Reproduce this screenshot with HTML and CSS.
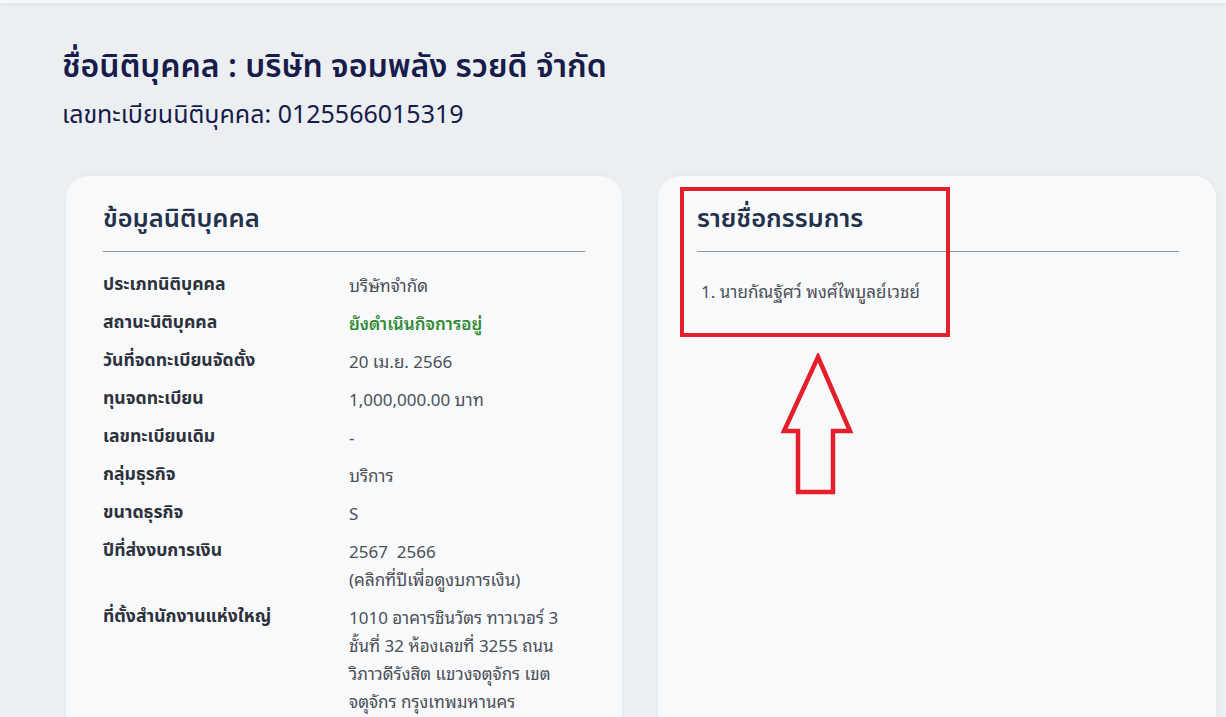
FILE: index.html
```html
<!DOCTYPE html>
<html lang="th">
<head>
<meta charset="utf-8">
<title>ข้อมูลนิติบุคคล</title>
<link rel="stylesheet" href="styles.css">
</head>
<body>
<div class="topbar"></div>
<main class="page">
  <h1 class="company">ชื่อนิติบุคคล : บริษัท จอมพลัง รวยดี จำกัด</h1>
  <p class="regno">เลขทะเบียนนิติบุคคล: 0125566015319</p>

  <div class="cards">
    <section class="card">
      <h2 class="card-title">ข้อมูลนิติบุคคล</h2>
      <dl class="info">
        <dt>ประเภทนิติบุคคล</dt><dd>บริษัทจำกัด</dd>
        <dt>สถานะนิติบุคคล</dt><dd class="ok">ยังดำเนินกิจการอยู่</dd>
        <dt>วันที่จดทะเบียนจัดตั้ง</dt><dd>20 เม.ย. 2566</dd>
        <dt>ทุนจดทะเบียน</dt><dd>1,000,000.00 บาท</dd>
        <dt>เลขทะเบียนเดิม</dt><dd>-</dd>
        <dt>กลุ่มธุรกิจ</dt><dd>บริการ</dd>
        <dt>ขนาดธุรกิจ</dt><dd>S</dd>
        <dt>ปีที่ส่งงบการเงิน</dt><dd>2567&nbsp; 2566<br>(คลิกที่ปีเพื่อดูงบการเงิน)</dd>
        <dt>ที่ตั้งสำนักงานแห่งใหญ่</dt><dd class="addr">1010 อาคารชินวัตร ทาวเวอร์ 3 ชั้นที่ 32 ห้องเลขที่ 3255 ถนน<wbr>วิภาวดีรังสิต แขวงจตุจักร เขต<wbr>จตุจักร กรุงเทพมหานคร</dd>
      </dl>
    </section>

    <section class="card card-right">
      <h2 class="card-title">รายชื่อกรรมการ</h2>
      <ol class="directors">
        <li>1. นายกัณฐัศว์ พงศ์ไพบูลย์เวชย์</li>
      </ol>
      <div class="mark-box"></div>
      <svg class="mark-arrow" width="76" height="144" viewBox="0 0 76 144">
        <path d="M38 4 L70 78 L53 78 L53 139 L18 139 L18 78 L4 78 Z" fill="none" stroke="#e21f2a" stroke-width="4.5" stroke-linejoin="miter"/>
      </svg>
    </section>
  </div>
</main>
</body>
</html>
```
FILE: styles.css
```css
* { box-sizing: border-box; }
html, body { margin: 0; padding: 0; }
body {
  background: #eceff2;
  font-family: "Noto Sans Thai", "Noto Sans", "DejaVu Sans", sans-serif;
  color: #1b1f4a;
  height: 717px;
  overflow: hidden;
}
.topbar {
  height: 3px;
  background: #f7f8fa;
  box-shadow: 0 1px 4px rgba(0,0,0,0.07);
}
.page {
  padding: 42px 0 0 62px;
}
.company {
  margin: 0;
  font-size: 32px;
  font-weight: 600;
  line-height: 44px;
  color: #171c4a;
}
.regno {
  margin: 8px 0 0;
  font-size: 25px;
  line-height: 36px;
  color: #171c4a;
}
.cards {
  display: grid;
  grid-template-columns: 556px 558px;
  gap: 36px;
  margin: 43px 0 0 4px;
}
.card {
  background: #f8f9fb;
  border-radius: 22px;
  padding: 24px 37px 20px;
  height: 600px;
  box-shadow: 0 0 6px rgba(0,0,0,0.03);
}
.card-right { position: relative; padding-left: 39px; }
.card-title {
  margin: 0;
  font-size: 25.5px;
  font-weight: 600;
  line-height: 38px;
  color: #24314b;
  padding-bottom: 13px;
  border-bottom: 1px solid #8e99a6;
}
.info {
  display: grid;
  grid-template-columns: 246px 1fr;
  row-gap: 10px;
  margin: 19px 0 0;
  font-size: 17px;
  line-height: 28px;
}
.info dt {
  font-weight: 700;
  font-size: 17.6px;
  color: #2d313b;
}
.info dd {
  margin: 0;
  color: #4b4f57;
  font-family: "Noto Sans Thai Looped", "Noto Sans Thai", "Noto Sans", sans-serif;
}
.info dd.addr { max-width: 226px; }
.info dd.ok { color: #2f8a33; font-weight: 600; }
.directors {
  list-style: none;
  margin: 25px 0 0;
  padding: 0 0 0 4px;
  font-size: 17px;
  line-height: 28px;
  color: #4b4f57;
  font-family: "Noto Sans Thai Looped", "Noto Sans Thai", "Noto Sans", sans-serif;
}
.mark-box {
  position: absolute;
  left: 22px;
  top: 11px;
  width: 270px;
  height: 150px;
  border: 4px solid #e21f2a;
}
.mark-arrow {
  position: absolute;
  left: 122px;
  top: 177px;
}
```
